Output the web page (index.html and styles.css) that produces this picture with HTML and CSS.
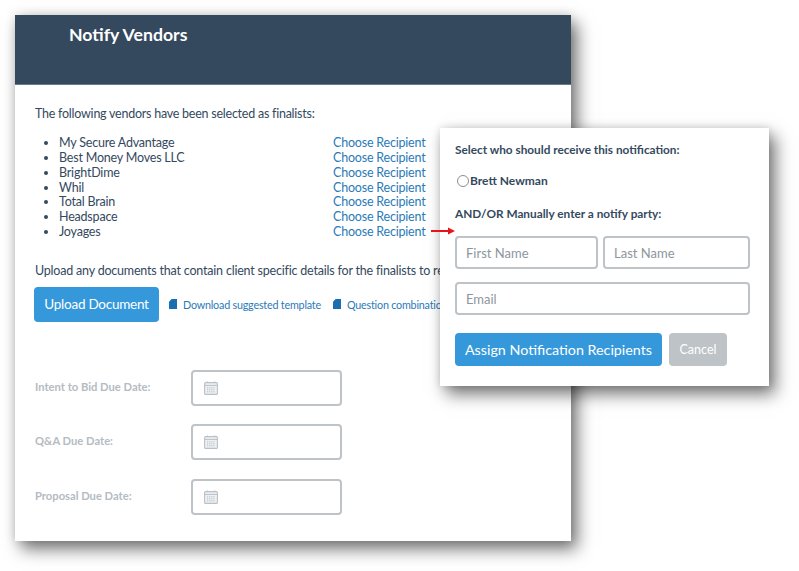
FILE: index.html
```html
<!DOCTYPE html>
<html lang="en">
<head>
    <meta charset="UTF-8">
    <title>Notify Vendors</title>
    <link rel="stylesheet" href="styles.css">
</head>
<body>
    <div class="stage">
        <div class="card">
            <div class="card-header">
                <h1>Notify Vendors</h1>
            </div>
            <div class="card-body">
                <p class="intro">The following vendors have been selected as finalists:</p>

                <ul class="vendors">
                    <li><span class="vendor-name">My Secure Advantage</span><a href="#">Choose Recipient</a></li>
                    <li><span class="vendor-name">Best Money Moves LLC</span><a href="#">Choose Recipient</a></li>
                    <li><span class="vendor-name">BrightDime</span><a href="#">Choose Recipient</a></li>
                    <li><span class="vendor-name">Whil</span><a href="#">Choose Recipient</a></li>
                    <li><span class="vendor-name">Total Brain</span><a href="#">Choose Recipient</a></li>
                    <li><span class="vendor-name">Headspace</span><a href="#">Choose Recipient</a></li>
                    <li><span class="vendor-name">Joyages</span><a href="#">Choose Recipient</a></li>
                </ul>

                <p class="upload-note">Upload any documents that contain client specific details for the finalists to re</p>

                <div class="upload-row">
                    <button class="btn btn-primary upload-btn">Upload Document</button>
                    <a class="file-link" href="#">
                        <svg class="file-icon" viewBox="0 0 8 10"><path d="M2.6 0H8v10H0V2.8z"/></svg>
                        Download suggested template
                    </a>
                    <a class="file-link" href="#">
                        <svg class="file-icon" viewBox="0 0 8 10"><path d="M2.6 0H8v10H0V2.8z"/></svg>
                        Question combinatio
                    </a>
                </div>

                <div class="date-row">
                    <label>Intent to Bid Due Date:</label>
                    <div class="date-input">
                        <svg class="cal-icon" viewBox="0 0 14 14"><use href="#cal"/></svg>
                    </div>
                </div>
                <div class="date-row">
                    <label>Q&amp;A Due Date:</label>
                    <div class="date-input">
                        <svg class="cal-icon" viewBox="0 0 14 14"><use href="#cal"/></svg>
                    </div>
                </div>
                <div class="date-row">
                    <label>Proposal Due Date:</label>
                    <div class="date-input">
                        <svg class="cal-icon" viewBox="0 0 14 14"><use href="#cal"/></svg>
                    </div>
                </div>
            </div>
        </div>

        <div class="popover">
            <div class="pop-title">Select who should receive this notification:</div>
            <label class="radio-row"><span class="radio"></span>Brett Newman</label>
            <div class="pop-title">AND/OR Manually enter a notify party:</div>
            <div class="name-row">
                <div class="text-field">First Name</div>
                <div class="text-field">Last Name</div>
            </div>
            <div class="text-field email">Email</div>
            <div class="pop-actions">
                <button class="btn btn-primary assign-btn">Assign Notification Recipients</button>
                <button class="btn btn-cancel">Cancel</button>
            </div>
        </div>

        <svg class="arrow" viewBox="0 0 24 8"><path d="M0 2.9h17V0.5L24 4l-7 3.5V5.1H0z"/></svg>
    </div>

    <svg width="0" height="0" class="defs">
        <symbol id="cal" viewBox="0 0 14 14">
            <path d="M3.5 0.5v2M10.5 0.5v2" fill="none" stroke="#b9c0c6" stroke-width="1.2"/>
            <rect x="0.6" y="1.6" width="12.8" height="11.8" rx="1" fill="#eef0f2" stroke="#b9c0c6" stroke-width="1.1"/>
            <path d="M1 4.4h12" stroke="#b9c0c6" stroke-width="1"/>
            <path d="M3 6.8h8M3 8.8h8M3 10.8h8" stroke="#b9c0c6" stroke-width="1" stroke-dasharray="1.2 0.9"/>
        </symbol>
    </svg>
</body>
</html>
```

FILE: styles.css
```css
:root {
    --navy: #34495e;
    --blue: #3498db;
    --link: #2a7ab8;
    --muted: #b4bbc2;
    --border: #bdc3c7;
}

* {
    box-sizing: border-box;
}

body {
    margin: 0;
    background: #fff;
    font-family: Lato, "Open Sans", sans-serif;
    color: var(--navy);
}

.stage {
    position: relative;
    width: 799px;
    height: 571px;
    padding: 15px 0 0 15px;
    overflow: hidden;
}

.defs {
    position: absolute;
}

/* main card */
.card {
    width: 556px;
    height: 526px;
    background: #fff;
    box-shadow: 6px 8px 16px rgba(0,0,0,0.55), 0 0 10px rgba(0,0,0,0.12);
}

.card-header {
    height: 70px;
    padding: 9px 54px;
    background: var(--navy);
    border-bottom: 1px solid #6b7a89;
}

.card-header h1 {
    margin: 0;
    font-size: 17.7px;
    line-height: 22px;
    font-weight: 700;
    color: #fff;
}

.card-body {
    padding: 20px 19px;
    font-size: 12.5px;
    letter-spacing: -0.2px;
}

.intro {
    margin: 0 0 13px 1px;
    line-height: 18px;
    letter-spacing: -0.24px;
}

.vendors {
    margin: 0 0 22px;
    padding: 0 0 0 25px;
    line-height: 14.85px;
}

.vendors li {
    white-space: nowrap;
}

.vendor-name {
    display: inline-block;
    width: 274px;
}

.vendors a {
    color: var(--link);
    text-decoration: none;
}

.upload-note {
    margin: 0 0 7px 1px;
    line-height: 18px;
    white-space: nowrap;
}

.upload-row {
    display: flex;
    align-items: center;
    white-space: nowrap;
    margin-bottom: 48px;
}

.btn {
    border: none;
    border-radius: 4px;
    font-family: inherit;
    color: #fff;
}

.btn-primary {
    background: var(--blue);
}

.upload-btn {
    flex-shrink: 0;
    width: 125px;
    height: 35px;
    padding: 0;
    font-size: 13.5px;
    letter-spacing: -0.25px;
    margin-right: 10px;
}

.file-link {
    display: flex;
    align-items: center;
    gap: 6px;
    margin-right: 12px;
    font-size: 10.75px;
    letter-spacing: -0.2px;
    color: var(--link);
    text-decoration: none;
}

.file-icon {
    flex-shrink: 0;
    width: 8px;
    height: 10px;
    fill: #1b6fb0;
}

.date-row {
    display: flex;
    align-items: center;
    height: 36px;
    margin-bottom: 18.5px;
}

.date-row label {
    width: 156.5px;
    padding: 0 0 3px 1px;
    font-size: 11.2px;
    letter-spacing: 0;
    font-weight: 700;
    color: var(--muted);
}

.date-input {
    display: flex;
    align-items: center;
    width: 151px;
    height: 36px;
    padding-left: 11px;
    border: 2px solid var(--border);
    border-radius: 4px;
}

.cal-icon {
    width: 14px;
    height: 14px;
}

.arrow {
    position: absolute;
    left: 431px;
    top: 227px;
    width: 24px;
    height: 8px;
    fill: #e8141c;
}

/* recipient popover */
.popover {
    position: absolute;
    left: 440px;
    top: 128px;
    width: 329px;
    height: 258px;
    padding: 15px;
    background: #fff;
    box-shadow: 6px 8px 16px rgba(0,0,0,0.55), 0 0 8px rgba(0,0,0,0.12);
}

.pop-title {
    font-size: 11.8px;
    line-height: 14px;
    font-weight: 700;
}

.radio-row {
    display: flex;
    align-items: center;
    gap: 1px;
    margin: 16px 0 18px;
    font-size: 12px;
    line-height: 16px;
    font-weight: 700;
}

.radio {
    width: 12px;
    height: 12px;
    margin: -1px 0 0 2px;
    border: 1px solid #8a8f94;
    border-radius: 50%;
}

.name-row {
    display: flex;
    gap: 5px;
    margin: 15px 0 13px;
}

.text-field {
    width: 143px;
    height: 33px;
    padding: 0 9px;
    border: 2px solid var(--border);
    border-radius: 4px;
    font-size: 13px;
    line-height: 30px;
    color: #8d969e;
}

.name-row .text-field:last-child {
    width: 147px;
}

.email {
    width: 295px;
}

.pop-actions {
    display: flex;
    gap: 7px;
    margin-top: 18px;
}

.assign-btn {
    width: 207px;
    height: 33px;
    padding: 0 0 1px;
    font-size: 14.3px;
}

.btn-cancel {
    width: 58px;
    height: 33px;
    padding: 0;
    background: var(--border);
    font-size: 12.5px;
}
```
